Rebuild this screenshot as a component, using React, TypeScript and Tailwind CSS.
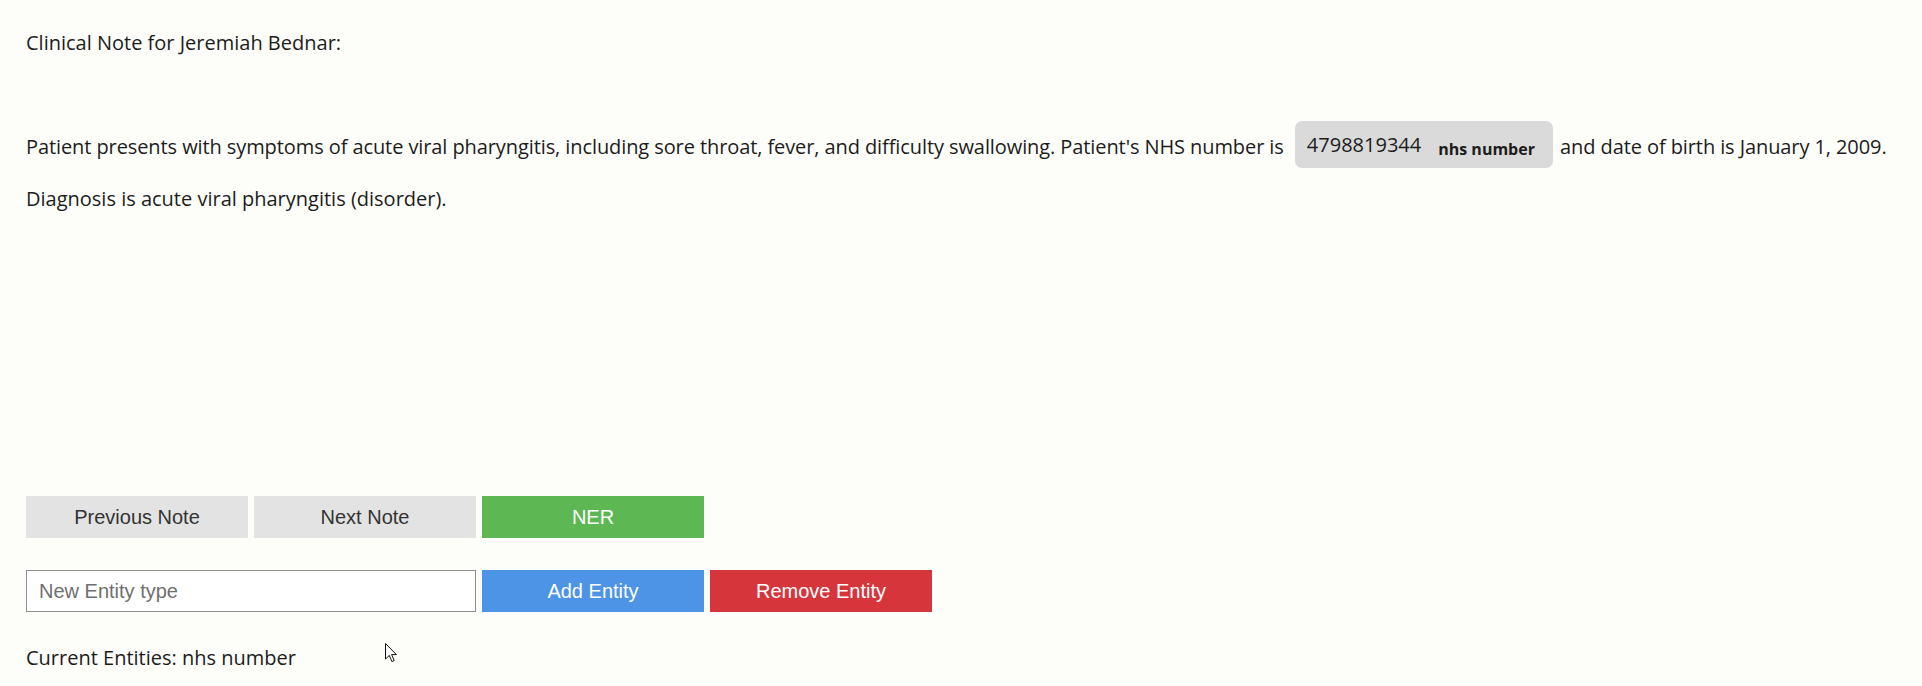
import { useState } from "react";

const buttonBase =
  "flex h-[42px] w-[222px] items-center justify-center font-['Liberation_Sans',Arial,sans-serif] text-[20px]";

function Cursor() {
  // mouse pointer that was captured in the recording
  return (
    <svg
      className="pointer-events-none absolute left-[385px] top-[643px]"
      width="12"
      height="20"
      viewBox="0 0 12 20"
    >
      <path
        d="M0.5 0.5 L0.5 16 L4.3 12.4 L6.9 18.6 L9.2 17.6 L6.6 11.6 L11.4 11.6 Z"
        fill="#ffffff"
        stroke="#111111"
        strokeWidth="1"
        strokeLinejoin="round"
      />
    </svg>
  );
}

export default function App() {
  const [entity, setEntity] = useState("");

  return (
    <div className="relative min-h-screen w-full bg-[#fdfdfa] pl-[26px] pt-[28px] font-['Open_Sans',sans-serif] text-[20px] text-[#1c1c1c]">
      {/* Note header */}
      <p className="leading-[30px]">Clinical Note for Jeremiah Bednar:</p>

      {/* Note body with entity marks */}
      <div className="mt-[63px] leading-[52px]">
        <p className="tracking-[-0.09px]">
          Patient presents with symptoms of acute viral pharyngitis, including sore throat, fever, and difficulty
          swallowing. Patient's NHS number is{" "}
          <mark className="ml-[6px] mr-[2px] inline-flex h-[47px] items-center rounded-[7px] bg-[#dadada] pl-[12px] pr-[18px] align-top tracking-normal text-[#1c1c1c]">
            <span className="leading-none">4798819344</span>
            <span className="ml-[17px] mt-[8px] text-[16px] font-bold leading-none">nhs number</span>
          </mark>{" "}
          and date of birth is January 1, 2009.
        </p>
        <p>Diagnosis is acute viral pharyngitis (disorder).</p>
      </div>

      {/* Navigation */}
      <div className="mt-[271px] flex gap-[6px]">
        <button className={`${buttonBase} bg-[#e3e3e3] text-[#333333]`}>Previous Note</button>
        <button className={`${buttonBase} bg-[#e3e3e3] text-[#333333]`}>Next Note</button>
        <button className={`${buttonBase} bg-[#5db854] text-white`}>NER</button>
      </div>

      {/* Entity editing */}
      <div className="mt-[32px] flex gap-[6px]">
        <input
          value={entity}
          onChange={(e) => setEntity(e.target.value)}
          placeholder="New Entity type"
          className="h-[42px] w-[450px] border border-[#8f8f8f] bg-white px-[12px] font-['Liberation_Sans',Arial,sans-serif] text-[20px] text-[#222] placeholder:text-[#6f6f6f] focus:outline-none"
        />
        <button className={`${buttonBase} bg-[#4d93e6] text-white`}>Add Entity</button>
        <button className={`${buttonBase} bg-[#d6353b] text-white`}>Remove Entity</button>
      </div>

      <p className="mt-[31px] leading-[30px]">Current Entities: nhs number</p>

      <Cursor />
    </div>
  );
}
